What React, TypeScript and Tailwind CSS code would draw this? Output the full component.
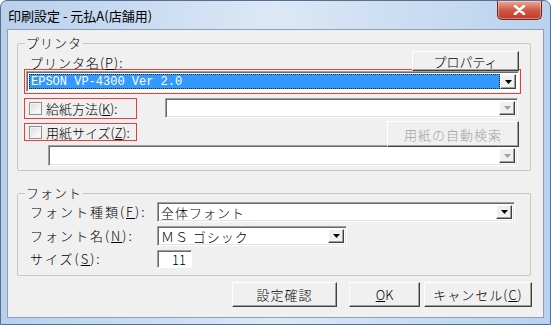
import React from "react";

const jp = { fontFamily: '"Noto Sans CJK JP", "Noto Sans", sans-serif' };
const mono = { fontFamily: '"Liberation Mono", "Noto Sans CJK JP", monospace' };

function Arrow({ disabled }: { disabled?: boolean }) {
  return (
    <div className="w-[16px] h-full flex items-center justify-center bg-[#f0f0f0] border-t border-l border-t-white border-l-white border-r border-b border-r-[#404040] border-b-[#404040] shadow-[inset_-1px_-1px_0_#a0a0a0]">
      <svg width="7" height="4" viewBox="0 0 7 4">
        <path d="M0 0h7L3.5 4z" fill={disabled ? "#a0a0a0" : "#000"} />
      </svg>
    </div>
  );
}

function Combo({
  className,
  text,
  disabled,
}: {
  className: string;
  text?: string;
  disabled?: boolean;
}) {
  return (
    <div
      className={`flex bg-white border-t border-l border-t-[#a0a0a0] border-l-[#a0a0a0] border-b border-r border-b-white border-r-white shadow-[inset_1px_1px_0_#696969,inset_-1px_-1px_0_#e3e3e3] p-[2px] ${className}`}
    >
      <div className="flex-1 flex items-center pl-[1px] text-[13px] leading-none text-black tracking-[1px]" style={jp}>
        {text}
      </div>
      <Arrow disabled={disabled} />
    </div>
  );
}

function Btn({
  className,
  children,
  disabled,
}: {
  className: string;
  children: React.ReactNode;
  disabled?: boolean;
}) {
  return (
    <div
      className={`flex items-center justify-center bg-[#f0f0f0] border-t border-l border-t-white border-l-white border-r border-b border-r-[#404040] border-b-[#404040] shadow-[inset_-1px_-1px_0_#a0a0a0] text-[13px] leading-none ${
        disabled ? "text-[#a0a0a0]" : "text-black"
      } ${className}`}
      style={jp}
    >
      {children}
    </div>
  );
}

function Check() {
  return (
    <div className="w-[13px] h-[13px] border border-[#8e8f8f] bg-gradient-to-br from-[#dcdcdc] to-white shadow-[inset_0_0_0_1px_#f4f4f4]" />
  );
}

export default function App() {
  return (
    <div className="w-[551px] h-[325px] flex flex-col border border-[#55708f] rounded-t-[7px] bg-gradient-to-r from-[#b9d0ec] via-[#dce8f6] to-[#bad1ed] overflow-hidden font-light">
      {/* title bar */}
      <div className="h-[28px] flex items-start justify-between">
        <div className="pl-[7px] pt-[7px] text-[13px] leading-[16px] text-black font-normal" style={jp}>
          印刷設定 - 元払A(店舗用)
        </div>
        <div className="mr-[8px] w-[45px] h-[19px] rounded-b-[5px] border border-t-0 border-[#6d2a20] bg-gradient-to-b from-[#e9a99a] via-[#cf5a45] to-[#c0392b] flex items-center justify-center shadow-[inset_0_0_0_1px_rgba(255,255,255,0.35)]">
          <svg width="13" height="10" viewBox="0 0 13 10">
            <path d="M2 1 L11 9 M11 1 L2 9" stroke="#fff" strokeWidth="2.6" strokeLinecap="round" />
          </svg>
        </div>
      </div>

      {/* client */}
      <div className="mx-[6px] mb-[6px] flex-1 border border-[#8aa0ba] bg-[#f0f0f0] flex flex-col pl-[9px] text-black" style={jp}>
        {/* printer group */}
        <fieldset className="mt-[5px] w-[514px] border border-[#c8c8c8] rounded-[2px] pl-[6px] pr-[9px] pb-[4px]">
          <legend className="ml-[1px] px-[1px] text-[13px] leading-[16px] tracking-[1px]">プリンタ</legend>
          <div className="h-[20px] flex items-end justify-between">
            <span className="ml-[6px] text-[13px] leading-[16px] tracking-[1px]">
              プリンタ名(<u>P</u>):
            </span>
            <Btn className="w-[107px] h-[20px] mr-[2px]">プロパティ</Btn>
          </div>
          <div className="-mt-[2px] h-[25px] border border-[#e2423f] p-[1px]">
            <div className="h-[21px] flex bg-white border-t border-l border-t-[#a0a0a0] border-l-[#a0a0a0] border-b border-r border-b-white border-r-white shadow-[inset_1px_1px_0_#696969] p-[2px]">
              <div className="flex-1 bg-[#3399ff] outline-1 outline-dotted outline-[#222] -outline-offset-1 flex items-center pl-[2px] text-white text-[12px] leading-none font-normal" style={mono}>
                EPSON VP-4300 Ver 2.0
              </div>
              <Arrow />
            </div>
          </div>
          <div className="mt-[4px] flex items-start">
            <div className="w-[113px] h-[21px] border border-[#e2423f] flex items-center">
              <div className="ml-[4px]">
                <Check />
              </div>
              <span className="ml-[4px] text-[13px] leading-none">
                給紙方法(<u>K</u>):
              </span>
            </div>
            <Combo className="ml-[28px] w-[353px] h-[20px]" disabled />
          </div>
          <div className="mt-[2px] flex items-start">
            <div className="mt-[2px] w-[113px] h-[18px] border border-[#e2423f] flex items-center">
              <div className="ml-[4px]">
                <Check />
              </div>
              <span className="ml-[4px] text-[13px] leading-none">
                用紙サイズ(<u>Z</u>):
              </span>
            </div>
            <Btn className="ml-auto mr-[2px] w-[132px] h-[26px] tracking-[1px]" disabled>
              用紙の自動検索
            </Btn>
          </div>
          <Combo className="-mt-[2px] ml-[24px] w-[470px] h-[21px]" disabled />
        </fieldset>

        {/* font group */}
        <fieldset className="mt-[14px] w-[514px] border border-[#c8c8c8] rounded-[2px] pl-[6px] pr-[9px] pb-[7px]">
          <legend className="ml-[1px] px-[1px] text-[13px] leading-[16px] tracking-[1px]">フォント</legend>
          <div className="mt-[1px] flex items-center h-[20px]">
            <span className="w-[133px] pl-[6px] text-[13px] tracking-[2px]">
              フォント種類(<u>F</u>):
            </span>
            <Combo className="w-[358px] h-[20px]" text="全体フォント" />
          </div>
          <div className="mt-[4px] flex items-center h-[20px]">
            <span className="w-[133px] pl-[6px] text-[13px] tracking-[2px]">
              フォント名(<u>N</u>):
            </span>
            <Combo className="w-[190px] h-[20px]" text="ＭＳ ゴシック" />
          </div>
          <div className="mt-[4px] flex items-center h-[18px]">
            <span className="w-[133px] pl-[6px] text-[13px] tracking-[2px]">
              サイズ(<u>S</u>):
            </span>
            <div className="w-[35px] h-[18px] bg-white border-t border-l border-t-[#a0a0a0] border-l-[#a0a0a0] border-b border-r border-b-white border-r-white shadow-[inset_1px_1px_0_#696969] flex items-center justify-end pr-[5px] text-[13px] leading-none">
              11
            </div>
          </div>
        </fieldset>

        {/* buttons */}
        <div className="mt-[6px] flex pl-[215px]">
          <Btn className="w-[105px] h-[25px] tracking-[1px]">設定確認</Btn>
          <Btn className="ml-[12px] w-[71px] h-[25px]">
            <u>O</u>K
          </Btn>
          <Btn className="ml-[4px] w-[108px] h-[25px] tracking-[1px]">
            キャンセル(<u>C</u>)
          </Btn>
        </div>
      </div>
    </div>
  );
}
